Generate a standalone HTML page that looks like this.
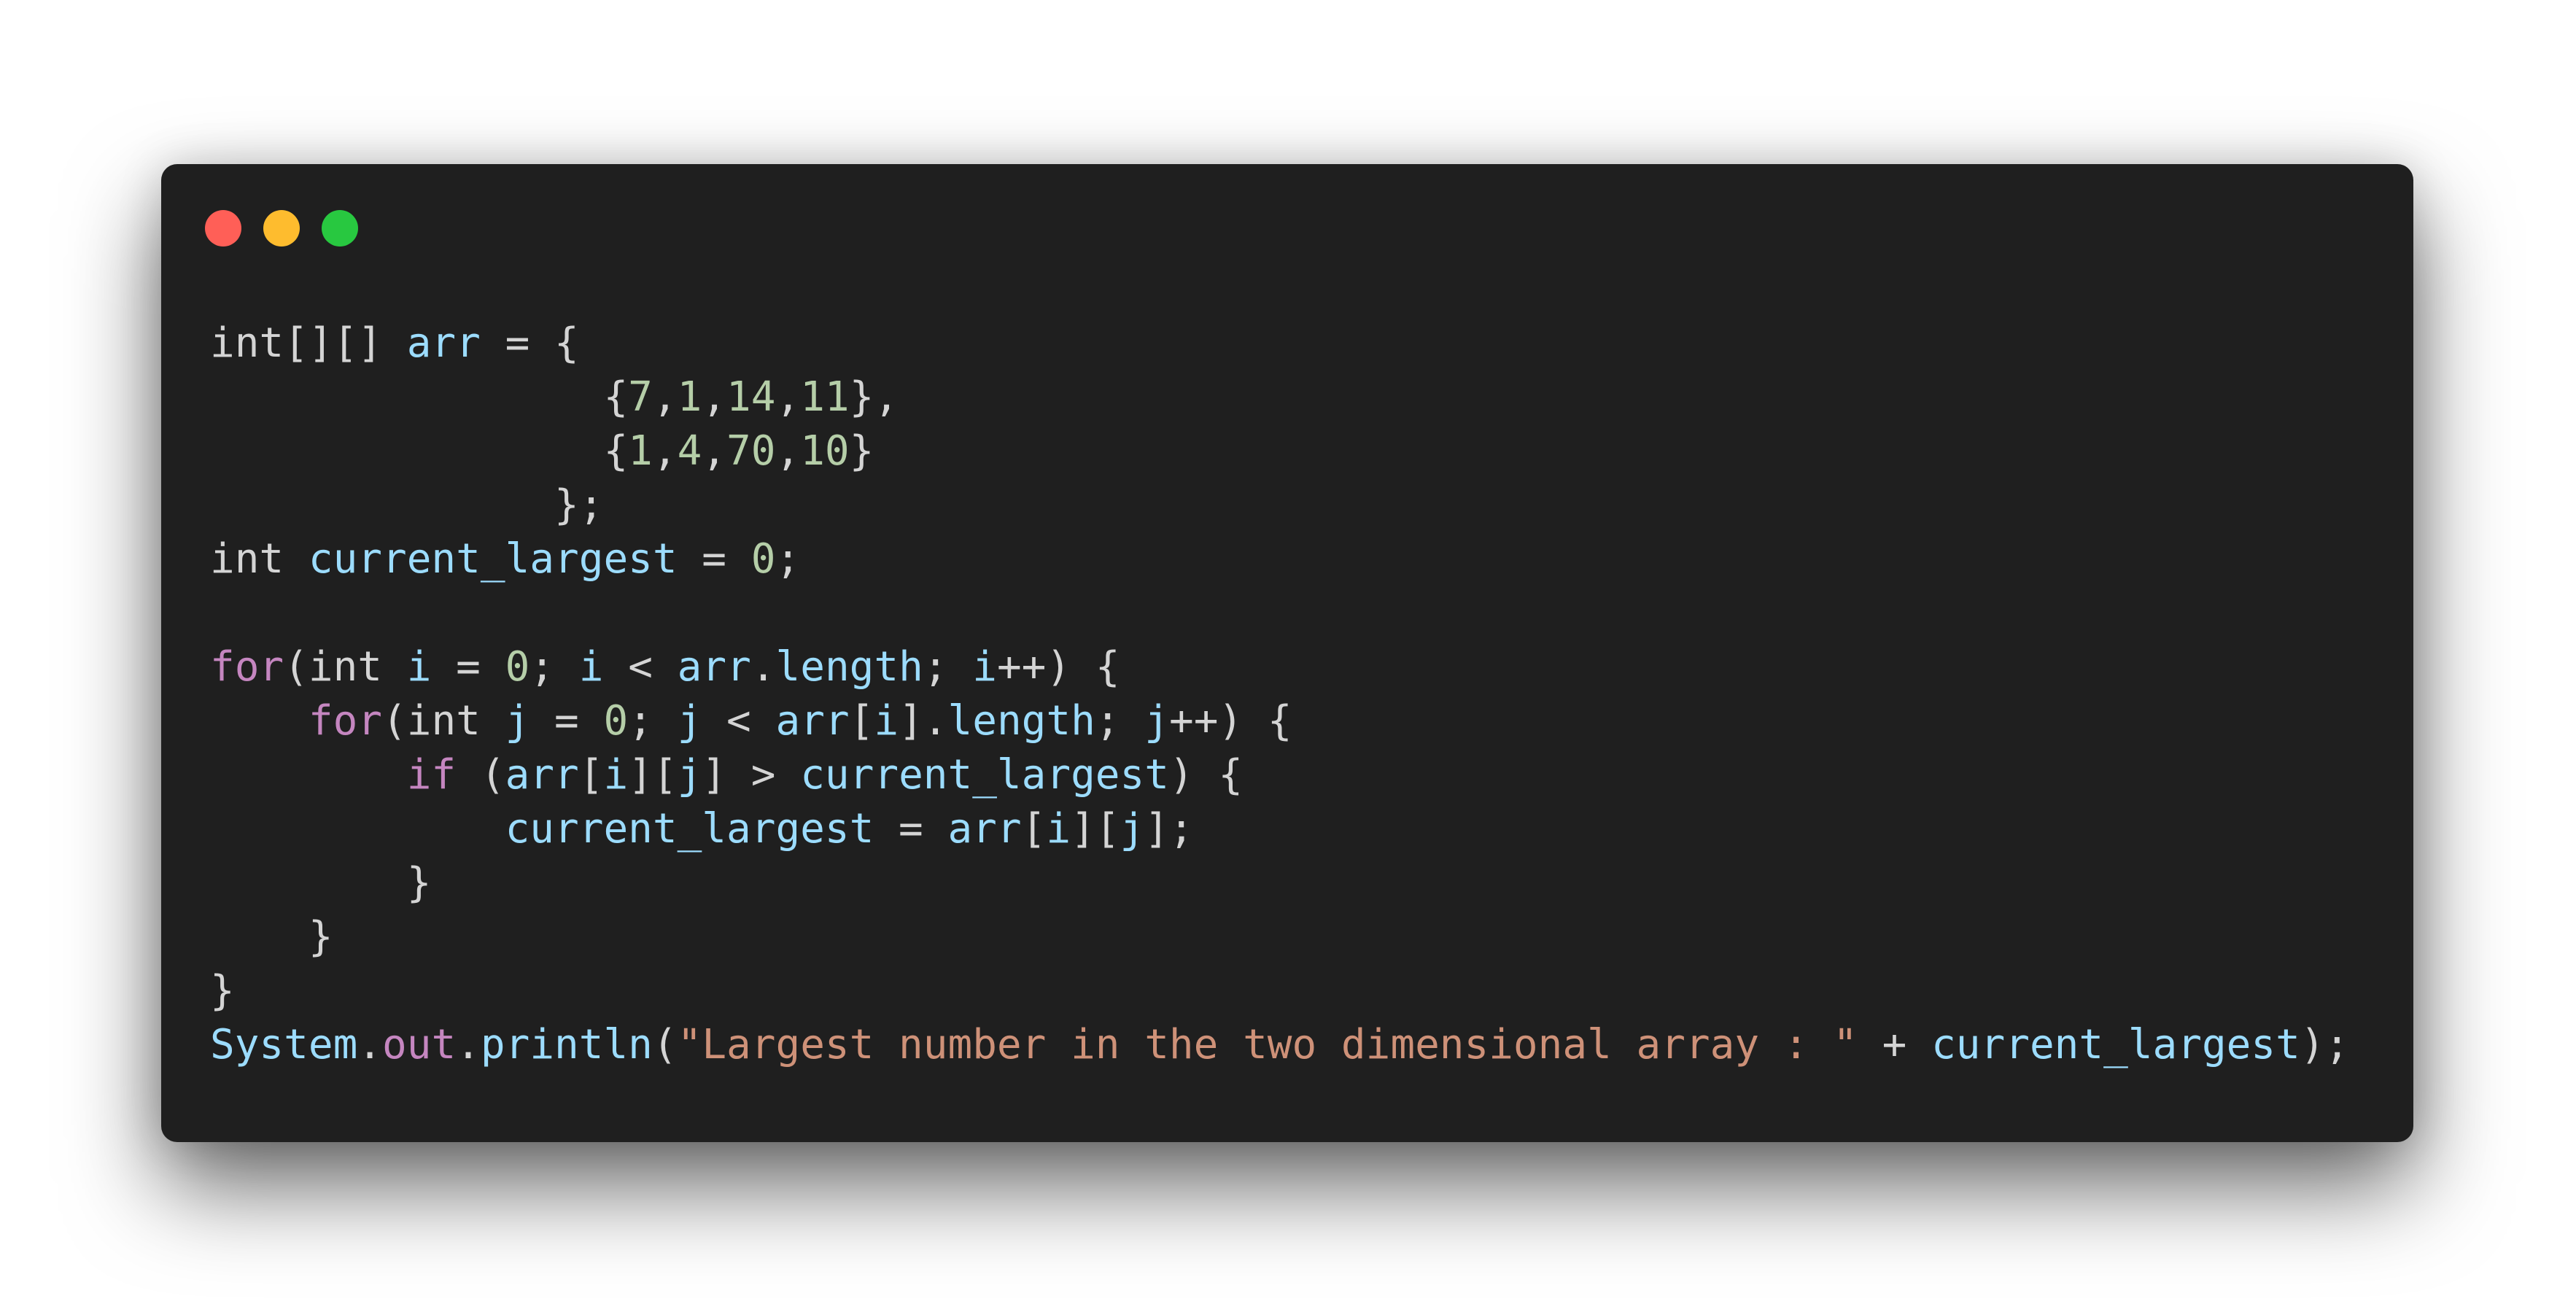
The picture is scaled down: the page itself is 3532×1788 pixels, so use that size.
<!DOCTYPE html>
<html><head><meta charset="utf-8"><style>
html,body{margin:0;padding:0;width:3532px;height:1788px;overflow:hidden;background:#ffffff;}
.win{position:absolute;left:221px;top:225px;width:3088px;height:1341px;background:#1f1f1f;border-radius:22px;
box-shadow:0 60px 220px rgba(0,0,0,0.6),0 0 60px rgba(0,0,0,0.15);}
.dot{position:absolute;top:288px;width:50px;height:50px;border-radius:50%;}
pre{position:absolute;left:288px;top:434px;margin:0;font-family:"DejaVu Sans Mono","Liberation Mono",monospace;font-size:56px;line-height:74px;color:#d4d4d4;white-space:pre;}
.b{color:#9cdcfe}.g{color:#b5cea8}.p{color:#c586c0}.o{color:#ce9178}
</style></head><body>
<div class="win"></div>
<div class="dot" style="left:281px;background:#ff5f57"></div>
<div class="dot" style="left:361px;background:#febc2e"></div>
<div class="dot" style="left:441px;background:#28c840"></div>
<pre>int[][] <span class="b">arr</span> = {
                {<span class="g">7</span>,<span class="g">1</span>,<span class="g">14</span>,<span class="g">11</span>},
                {<span class="g">1</span>,<span class="g">4</span>,<span class="g">70</span>,<span class="g">10</span>}
              };
int <span class="b">current_largest</span> = <span class="g">0</span>;

<span class="p">for</span>(int <span class="b">i</span> = <span class="g">0</span>; <span class="b">i</span> &lt; <span class="b">arr</span>.<span class="b">length</span>; <span class="b">i</span>++) {
    <span class="p">for</span>(int <span class="b">j</span> = <span class="g">0</span>; <span class="b">j</span> &lt; <span class="b">arr</span>[<span class="b">i</span>].<span class="b">length</span>; <span class="b">j</span>++) {
        <span class="p">if</span> (<span class="b">arr</span>[<span class="b">i</span>][<span class="b">j</span>] &gt; <span class="b">current_largest</span>) {
            <span class="b">current_largest</span> = <span class="b">arr</span>[<span class="b">i</span>][<span class="b">j</span>];
        }
    }
}
<span class="b">System</span>.<span class="p">out</span>.<span class="b">println</span>(<span class="o">"Largest number in the two dimensional array : "</span> + <span class="b">current_largest</span>);</pre>
</body></html>
